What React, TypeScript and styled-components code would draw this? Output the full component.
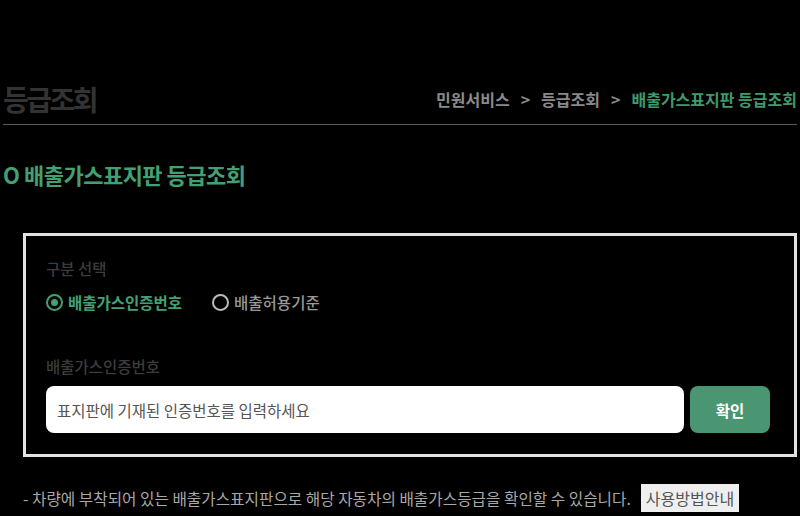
import React from "react";
import styled, { createGlobalStyle } from "styled-components";

const Global = createGlobalStyle`
  html, body { margin: 0; padding: 0; background: #000; }
  body { font-family: "Noto Sans CJK KR", "Noto Sans", sans-serif; }
  * { box-sizing: border-box; }
`;

const Page = styled.div`
  width: 800px;
  height: 516px;
  overflow: hidden;
  padding: 0 3px;
`;

const Header = styled.div`
  margin-top: 74px;
  height: 51px;
  display: flex;
  align-items: center;
  justify-content: space-between;
  border-bottom: 1px solid #5a5a5a;
`;

const Title = styled.h1`
  margin: 0;
  font-size: 28px;
  font-weight: 700;
  color: #333;
  letter-spacing: -2.5px;
`;

const Crumbs = styled.div`
  display: flex;
  align-items: center;
  gap: 11px;
  font-size: 16px;
  font-weight: 700;
  color: #8a8a8a;
`;

const Crumb = styled.span<{ $active?: boolean }>`
  color: ${(p) => (p.$active ? "#3f9a6c" : "#8a8a8a")};
`;

const SectionTitle = styled.h2`
  margin: 34px 0 0 0;
  font-size: 22px;
  font-weight: 700;
  color: #43a073;
  letter-spacing: -0.5px;
  line-height: 30px;
`;

const Box = styled.div`
  margin: 44px 0 0 20px;
  border: 3px solid #e2e2e2;
  height: 224px;
  padding: 22px 24px 0 20px;
`;

const Label = styled.div`
  font-size: 15.5px;
  font-weight: 500;
  color: #3c3c3c;
  line-height: 20px;
`;

const RadioRow = styled.div`
  display: flex;
  gap: 30px;
  margin-top: 12px;
  height: 24px;
  align-items: center;
`;

const Radio = styled.label<{ $checked?: boolean }>`
  display: flex;
  align-items: center;
  gap: 5px;
  font-size: 15.5px;
  font-weight: ${(p) => (p.$checked ? 700 : 500)};
  color: ${(p) => (p.$checked ? "#43a073" : "#999")};
`;

const Dot = styled.span<{ $checked?: boolean }>`
  width: 17px;
  height: 17px;
  border-radius: 50%;
  border: 2px solid ${(p) => (p.$checked ? "#43a073" : "#bbb")};
  display: flex;
  align-items: center;
  justify-content: center;
  &::after {
    content: "";
    width: 7px;
    height: 7px;
    border-radius: 50%;
    background: ${(p) => (p.$checked ? "#43a073" : "transparent")};
  }
`;

const FieldLabel = styled(Label)`
  margin-top: 42px;
`;

const InputRow = styled.div`
  display: flex;
  gap: 6px;
  margin-top: 10px;
`;

const Input = styled.div`
  flex: 1;
  height: 47px;
  background: #fff;
  border-radius: 8px;
  display: flex;
  align-items: center;
  padding-left: 11px;
  font-size: 15.5px;
  color: #555;
`;

const Button = styled.div`
  width: 80px;
  height: 47px;
  background: #4a9672;
  border-radius: 8px;
  display: flex;
  align-items: center;
  justify-content: center;
  color: #fff;
  font-size: 15.5px;
  font-weight: 700;
`;

const Footer = styled.div`
  display: flex;
  align-items: center;
  margin: 27px 0 0 20px;
  gap: 10px;
`;

const Note = styled.span`
  font-size: 15.7px;
  color: #a8a8a8;
  white-space: nowrap;
`;

const Help = styled.span`
  background: #efefef;
  color: #555;
  font-size: 16px;
  height: 28px;
  padding: 0 5px;
  display: flex;
  align-items: center;
  white-space: nowrap;
`;

export default function App() {
  return (
    <Page>
      <Global />
      <Header>
        <Title>등급조회</Title>
        <Crumbs>
          <Crumb>민원서비스</Crumb>
          <Crumb>&gt;</Crumb>
          <Crumb>등급조회</Crumb>
          <Crumb>&gt;</Crumb>
          <Crumb $active>배출가스표지판 등급조회</Crumb>
        </Crumbs>
      </Header>
      <SectionTitle>O 배출가스표지판 등급조회</SectionTitle>
      <Box>
        <Label>구분 선택</Label>
        <RadioRow>
          <Radio $checked>
            <Dot $checked />
            배출가스인증번호
          </Radio>
          <Radio>
            <Dot />
            배출허용기준
          </Radio>
        </RadioRow>
        <FieldLabel>배출가스인증번호</FieldLabel>
        <InputRow>
          <Input>표지판에 기재된 인증번호를 입력하세요</Input>
          <Button>확인</Button>
        </InputRow>
      </Box>
      <Footer>
        <Note>- 차량에 부착되어 있는 배출가스표지판으로 해당 자동차의 배출가스등급을 확인할 수 있습니다.</Note>
        <Help>사용방법안내</Help>
      </Footer>
    </Page>
  );
}
